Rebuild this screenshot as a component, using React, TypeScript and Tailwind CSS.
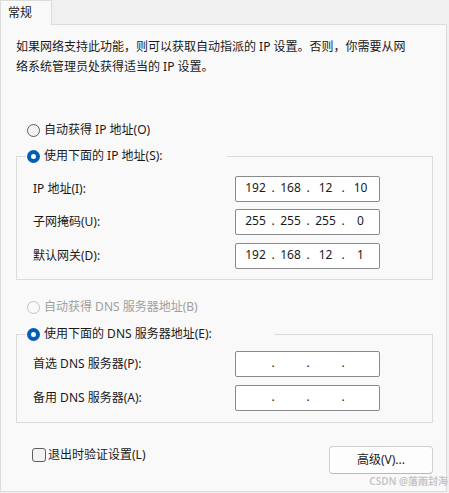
import React from 'react';

type RadioProps = { checked?: boolean; disabled?: boolean };

function Radio({ checked, disabled }: RadioProps) {
  if (checked) {
    return (
      <span className="w-[13px] h-[13px] rounded-full bg-[#005fb8] flex items-center justify-center shrink-0">
        <span className="w-[5px] h-[5px] rounded-full bg-white" />
      </span>
    );
  }
  return (
    <span
      className={
        disabled
          ? 'w-[13px] h-[13px] rounded-full border border-[#c4c4c4] bg-[#f9f9f9] shrink-0'
          : 'w-[13px] h-[13px] rounded-full border border-[#5e5e5e] bg-[#f3f3f3] shrink-0'
      }
    />
  );
}

function IpBox({ parts }: { parts: string[] }) {
  return (
    <div className="h-[26px] w-[145px] bg-white border border-[#8a8a8a] rounded-[2px] flex items-center pl-[4px] text-[12px] text-[#1a1a1a]">
      {parts.map((p, i) => (
        <React.Fragment key={i}>
          <span className="w-[31px] text-center leading-none -mt-[3px]">{p}</span>
          {i < 3 && <span className="w-[4px] text-center leading-none -mt-[3px]">.</span>}
        </React.Fragment>
      ))}
    </div>
  );
}

function Row({ label, parts, className }: { label: string; parts: string[]; className?: string }) {
  return (
    <div className={'flex items-center h-[26px] ' + (className || '')}>
      <span className="w-[202px]">{label}</span>
      <IpBox parts={parts} />
    </div>
  );
}

export default function App() {
  return (
    <div className="w-[449px] h-[493px] bg-[#f0f0f0] relative overflow-hidden text-[12px] text-[#1a1a1a] font-['Noto_Sans','Noto_Sans_CJK_SC',sans-serif]">
      {/* tab */}
      <div className="relative z-10 w-[52px] h-[25px] bg-[#f9f9f9] border-x border-t border-[#dcdcdc] pl-[7px] flex items-center">
        <span className="leading-none">常规</span>
      </div>

      {/* panel */}
      <div className="-mt-px w-[447px] h-[468px] bg-[#f9f9f9] border border-[#dcdcdc] px-[15px] pt-[12px]">
        <p className="leading-[20px]">
          如果网络支持此功能，则可以获取自动指派的 IP 设置。否则，你需要从网
          <br />
          络系统管理员处获得适当的 IP 设置。
        </p>

        <div className="mt-[44px] h-[18px] ml-[11px] flex items-center gap-[4px]">
          <Radio />
          <span>自动获得 IP 地址(O)</span>
        </div>

        <fieldset className="mt-[8px] w-[417px] border border-[#dcdcdc] pb-[10px]">
          <legend className="ml-[9px] w-[201px] h-[18px]">
            <div className="h-[18px] flex items-center gap-[4px] pl-[1px]">
              <Radio checked />
              <span>使用下面的 IP 地址(S):</span>
            </div>
          </legend>
          <div className="pl-[16px]">
            <Row className="mt-[11px]" label="IP 地址(I):" parts={['192', '168', '12', '10']} />
            <Row className="mt-[7px]" label="子网掩码(U):" parts={['255', '255', '255', '0']} />
            <Row className="mt-[8px]" label="默认网关(D):" parts={['192', '168', '12', '1']} />
          </div>
        </fieldset>

        <div className="mt-[18px] h-[18px] ml-[11px] flex items-center gap-[4px] text-[#a0a0a0]">
          <Radio disabled />
          <span>自动获得 DNS 服务器地址(B)</span>
        </div>

        <fieldset className="mt-[9px] w-[417px] border border-[#dcdcdc] pb-[11px]">
          <legend className="ml-[9px] w-[248px] h-[18px]">
            <div className="h-[18px] flex items-center gap-[4px] pl-[1px]">
              <Radio checked />
              <span>使用下面的 DNS 服务器地址(E):</span>
            </div>
          </legend>
          <div className="pl-[16px]">
            <Row className="mt-[8px]" label="首选 DNS 服务器(P):" parts={['', '', '', '']} />
            <Row className="mt-[8px]" label="备用 DNS 服务器(A):" parts={['', '', '', '']} />
          </div>
        </fieldset>

        <div className="mt-[23px] w-[417px] flex items-start justify-between">
          <div className="mt-[2px] ml-[16px] h-[14px] flex items-center gap-[2px]">
            <span className="w-[14px] h-[14px] rounded-[3px] border border-[#5e5e5e] bg-[#f3f3f3]" />
            <span>退出时验证设置(L)</span>
          </div>
          <button className="w-[104px] h-[28px] bg-[#fdfdfd] border border-[#d0d0d0] border-b-[#b8b8b8] rounded-[4px] flex items-center justify-center">
            高级(V)...
          </button>
        </div>
      </div>

      <span className="absolute right-[1px] bottom-[7px] text-[10px] leading-none font-semibold text-[#c6c6c6]">
        CSDN @落雨封海
      </span>
    </div>
  );
}
